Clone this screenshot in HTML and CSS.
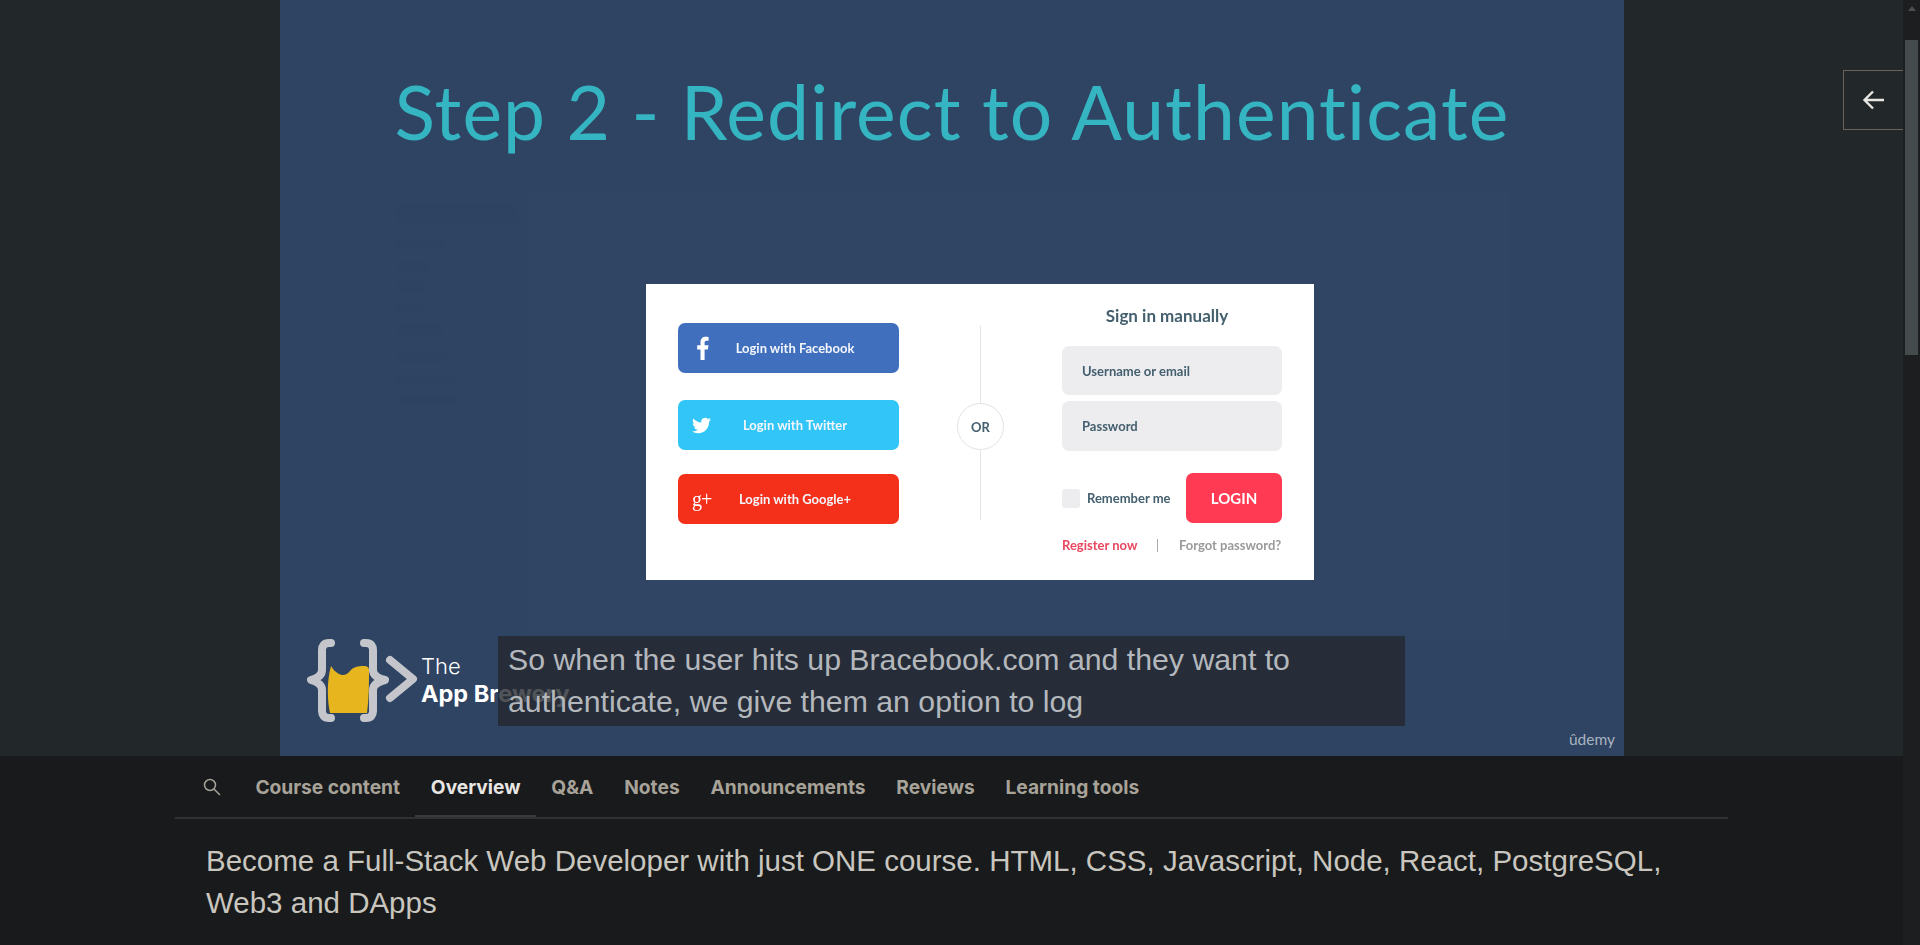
FILE: index.html
```html
<!DOCTYPE html>
<html lang="en">
<head>
  <meta charset="UTF-8" />
  <title>Step 2 - Redirect to Authenticate</title>
  <link rel="stylesheet" href="styles.css">
</head>
<body>
  <div class="page">
    <section class="stage">
      <div class="slide">
        <div class="ghost-panel"></div>
        <ul class="ghost-menu">
          <li class="ghost-logo"></li>
          <li class="w48"></li><li class="w33"></li><li class="w28"></li><li class="w28"></li><li class="w48"></li>
          <li class="w51 gap"></li><li class="w61"></li><li class="w61"></li>
        </ul>

        <h1 class="slide-title">Step 2 - Redirect to Authenticate</h1>

        <div class="login-card">
          <div class="social">
            <div class="social-btn fb">
              <svg class="social-icon" viewBox="0 0 19 24"><path fill="#fff" d="M12.6 24V13.4h3.3l.6-4.1h-3.900V6.700c0-1.200.4-2 2-2h2V1c-.4 0-1.600-.2-3-.2-3 0-5.100 1.900-5.100 5.300v3.200H5.200v4.100h3.300V24z"/></svg>
              <span class="social-label">Login with Facebook</span>
            </div>
            <div class="social-btn tw">
              <svg class="social-icon" viewBox="0 0 24 24"><path fill="#fff" d="M23.953 4.57a10 10 0 01-2.825.775 4.958 4.958 0 002.163-2.723c-.951.555-2.005.959-3.127 1.184a4.92 4.92 0 00-8.384 4.482C7.69 8.095 4.067 6.13 1.64 3.162a4.822 4.822 0 00-.666 2.475c0 1.71.87 3.213 2.188 4.096a4.904 4.904 0 01-2.228-.616v.06a4.923 4.923 0 003.946 4.827 4.996 4.996 0 01-2.212.085 4.936 4.936 0 004.604 3.417 9.867 9.867 0 01-6.102 2.105c-.39 0-.779-.023-1.17-.067a13.995 13.995 0 007.557 2.209c9.053 0 13.998-7.496 13.998-13.985 0-.21 0-.42-.015-.63A9.935 9.935 0 0024 4.59z"/></svg>
              <span class="social-label">Login with Twitter</span>
            </div>
            <div class="social-btn gp">
              <span class="social-icon gp-mark">g+</span>
              <span class="social-label">Login with Google+</span>
            </div>
          </div>

          <div class="or-col">
            <span class="or-line top"></span>
            <span class="or-circle">OR</span>
            <span class="or-line bottom"></span>
          </div>

          <div class="manual">
            <h2 class="manual-title">Sign in manually</h2>
            <div class="field">Username or email</div>
            <div class="field tall">Password</div>
            <div class="remember-row">
              <span class="checkbox"></span>
              <span class="remember">Remember me</span>
              <span class="login-btn">LOGIN</span>
            </div>
            <div class="links-row">
              <a class="register">Register now</a>
              <span class="pipe"></span>
              <a class="forgot">Forgot password?</a>
            </div>
          </div>
        </div>

        <div class="brand">
          <svg class="brand-mark" viewBox="0 0 116 84">
            <path class="mark-fill" d="M28 27c2 3 4 6 8 8 4 2 8 1 11-3 3-4 8-5 14-5 3 0 5 1 5 4 0 14 0 28-2 43H27c-3-14-3-33 1-47z"/>
            <path class="mark-line" d="M28 4h-2c-5 0-7 3-7 7v20c0 5-4 8-11 10 7 2 11 5 11 10v21c0 4 2 7 7 7h2"/>
            <path class="mark-line" d="M61 4h2c5 0 7 3 7 7v20c0 5 4 8 12 10-8 2-12 5-12 10v21c0 4-2 7-7 7h-2"/>
            <path class="mark-line" d="M87 21l23 19-23 19"/>
          </svg>
          <div class="brand-text">
            <span class="brand-the">The</span>
            <span class="brand-name">App Brewery</span>
          </div>
        </div>

        <div class="caption">So when the user hits up Bracebook.com and they want to authenticate, we give them an option to log</div>
        <span class="watermark">ûdemy</span>
      </div>

      <a class="sidebar-toggle">
        <svg viewBox="0 0 24 24" width="24" height="24"><path d="M22 12H3M11 3.500 2.500 12l8.500 8.500" fill="none" stroke="#e8e6e3" stroke-width="2.400"/></svg>
      </a>
    </section>

    <nav class="tabs">
      <svg class="tab-search" viewBox="0 0 18 18" width="18" height="18"><circle cx="7" cy="7" r="5.500" fill="none" stroke="#a8a399" stroke-width="1.500"/><path d="M11 11l6 6" stroke="#a8a399" stroke-width="1.500"/></svg>
      <a class="tab">Course content</a>
      <a class="tab active">Overview</a>
      <a class="tab">Q&amp;A</a>
      <a class="tab">Notes</a>
      <a class="tab">Announcements</a>
      <a class="tab">Reviews</a>
      <a class="tab">Learning tools</a>
    </nav>

    <p class="course-lead">Become a Full-Stack Web Developer with just ONE course. HTML, CSS, Javascript, Node, React, PostgreSQL, Web3 and DApps</p>
  </div>

  <div class="scrollbar">
    <span class="scroll-up"></span>
    <span class="scroll-thumb"></span>
  </div>
</body>
</html>
```

FILE: styles.css
```css
html, body {
  margin: 0;
  height: 100%;
  overflow: hidden;
}

body {
  display: flex;
  background-color: #181a1c;
  font-family: "Liberation Sans", Arial, sans-serif;
}

.page {
  flex: 1;
  min-width: 0;
}

/* video area */
.stage {
  position: relative;
  height: 756px;
  padding-left: 280px;
  background-color: #22272a;
}

.slide {
  position: relative;
  display: flex;
  flex-direction: column;
  width: 1344px;
  height: 756px;
  background-color: #2e4462;
  overflow: hidden;
}

.ghost-panel {
  position: absolute;
  left: 247px;
  top: 192px;
  width: 983px;
  height: 448px;
  background-color: #2f4563;
}

.ghost-menu {
  position: absolute;
  left: 116px;
  top: 203px;
  margin: 0;
  padding: 0;
  list-style: none;
  display: flex;
  flex-direction: column;
  gap: 11px;
}

.ghost-menu li {
  height: 10px;
  background-color: #2d4361;
}

.ghost-menu .ghost-logo {
  width: 122px;
  height: 19px;
  margin-bottom: 7px;
}

.ghost-menu .w28 { width: 28px; }
.ghost-menu .w33 { width: 33px; }
.ghost-menu .w48 { width: 48px; }
.ghost-menu .w51 { width: 51px; }
.ghost-menu .w61 { width: 61px; }
.ghost-menu .gap { margin-top: 8px; }

.slide-title {
  position: relative;
  margin: 68px 0 0;
  font-family: Lato, sans-serif;
  font-size: 75px;
  font-weight: 400;
  letter-spacing: 1.1px;
  line-height: 86px;
  text-align: center;
  color: #35b5c2;
}

/* login image in the slide */
.login-card {
  position: relative;
  display: flex;
  width: 668px;
  height: 296px;
  margin: 130px 0 0 366px;
  padding: 20px 32px 0;
  box-sizing: border-box;
  background-color: #fff;
  font-family: Lato, sans-serif;
  font-weight: 700;
  color: #44606f;
  filter: blur(0.3px);
}

.social {
  display: flex;
  flex-direction: column;
  width: 221px;
  margin-top: 19px;
}

.social-btn {
  display: flex;
  align-items: center;
  height: 50px;
  padding: 0 20px 0 14px;
  border-radius: 7px;
  color: #f3f6fa;
  font-size: 13px;
}

.fb { background-color: #3f6fbd; }
.tw { background-color: #31c6f7; margin-top: 27px; }
.gp { background-color: #f42f1a; margin-top: 24px; }

.social-icon {
  width: 19px;
  height: 19px;
  flex: none;
}

.fb .social-icon {
  height: 24px;
}

.gp-mark {
  font-family: "Liberation Serif", serif;
  font-size: 20px;
  font-weight: 400;
  letter-spacing: -1px;
  line-height: 19px;
  color: #fff;
}

.social-label {
  flex: 1;
  text-align: center;
}

.or-col {
  display: flex;
  flex-direction: column;
  align-items: center;
  width: 163px;
  margin-top: 22px;
}

.or-line {
  width: 1px;
  background-color: #e3e3e6;
}

.or-line.top { height: 77px; }
.or-line.bottom { height: 70px; }

.or-circle {
  display: flex;
  align-items: center;
  justify-content: center;
  width: 47px;
  height: 47px;
  box-sizing: border-box;
  border: 1px solid #e3e3e6;
  border-radius: 50%;
  font-size: 13px;
}

.manual {
  width: 220px;
}

.manual-title {
  margin: 0 0 18px;
  padding-right: 10px;
  font-size: 17px;
  font-weight: 700;
  line-height: 24px;
  text-align: center;
}

.field {
  display: flex;
  align-items: center;
  height: 49px;
  padding-left: 20px;
  border-radius: 7px;
  background-color: #edecef;
  font-size: 13px;
}

.field.tall {
  height: 50px;
  margin-top: 6px;
}

.remember-row {
  display: flex;
  align-items: center;
  margin-top: 22px;
}

.checkbox {
  width: 18px;
  height: 19px;
  border-radius: 3px;
  background-color: #edecef;
}

.remember {
  margin-left: 7px;
  font-size: 13px;
}

.login-btn {
  display: flex;
  align-items: center;
  justify-content: center;
  width: 96px;
  height: 50px;
  margin-left: auto;
  border-radius: 7px;
  background-color: #ff3a52;
  color: #fff;
  font-size: 15px;
  font-weight: 700;
}

.links-row {
  display: flex;
  align-items: center;
  height: 20px;
  margin-top: 12px;
  font-size: 13px;
  white-space: nowrap;
}

.register {
  width: 95px;
  color: #e8485f;
}

.pipe {
  width: 1px;
  height: 13px;
  margin-right: 21px;
  background-color: #aaa;
}

.forgot { color: #9a9a9a; }

/* logo, subtitle and watermark sit on the video */
.brand {
  position: absolute;
  left: 23px;
  top: 639px;
  display: flex;
}

.brand-mark {
  width: 116px;
  height: 84px;
}

.mark-fill { fill: #e7b61f; }

.mark-line {
  fill: none;
  stroke: #c5c6cb;
  stroke-width: 8;
  stroke-linecap: round;
  stroke-linejoin: round;
}

.brand-text {
  display: flex;
  flex-direction: column;
  margin: 14px 0 0 2px;
  color: #fff;
  font-family: Inter, sans-serif;
  font-size: 22px;
  line-height: 27px;
}

.brand-the { font-weight: 300; }

.brand-name {
  font-size: 23.5px;
  font-weight: 700;
}

.caption {
  position: absolute;
  left: 218px;
  top: 636px;
  width: 907px;
  height: 90px;
  padding: 3px 10px;
  box-sizing: border-box;
  background-color: rgba(36, 40, 46, 0.8);
  color: #b4b8bd;
  font-size: 30.25px;
  line-height: 42px;
}

.watermark {
  position: absolute;
  right: 9px;
  bottom: 8px;
  color: #a9b3c0;
  font-family: Lato, sans-serif;
  font-size: 15.5px;
}

.sidebar-toggle {
  position: absolute;
  right: 0;
  top: 70px;
  display: flex;
  align-items: center;
  justify-content: center;
  width: 60px;
  height: 60px;
  box-sizing: border-box;
  border: 1px solid #6a6358;
  border-right: none;
}

/* tabs under the video */
.tabs {
  display: flex;
  align-items: center;
  height: 61px;
  margin: 0 175px;
  padding-left: 28px;
  border-bottom: 2px solid #2f3234;
  font-family: Inter, sans-serif;
  font-size: 19.2px;
  font-weight: 700;
  color: #a8a399;
}

.tab-search {
  margin-right: 19px;
}

.tab {
  position: relative;
  padding: 0 15.4px;
}

.tab.active {
  color: #e8e6e3;
}

.tab.active::after {
  content: "";
  position: absolute;
  left: 0;
  right: 0;
  bottom: -18px;
  height: 2px;
  background-color: #383b3d;
}

.course-lead {
  width: 1480px;
  margin: 21px 0 0 206px;
  font-size: 29.5px;
  line-height: 42px;
  color: #c9c6bf;
}

/* browser scrollbar */
.scrollbar {
  position: relative;
  flex: none;
  width: 17px;
  background-color: #1c1e1f;
}

.scroll-up {
  position: absolute;
  left: 5px;
  top: 6px;
  border: 4px solid transparent;
  border-top: none;
  border-bottom: 5px solid #4a4e50;
}

.scroll-thumb {
  position: absolute;
  left: 2px;
  top: 40px;
  width: 13px;
  height: 315px;
  background-color: #454a4d;
}
```
